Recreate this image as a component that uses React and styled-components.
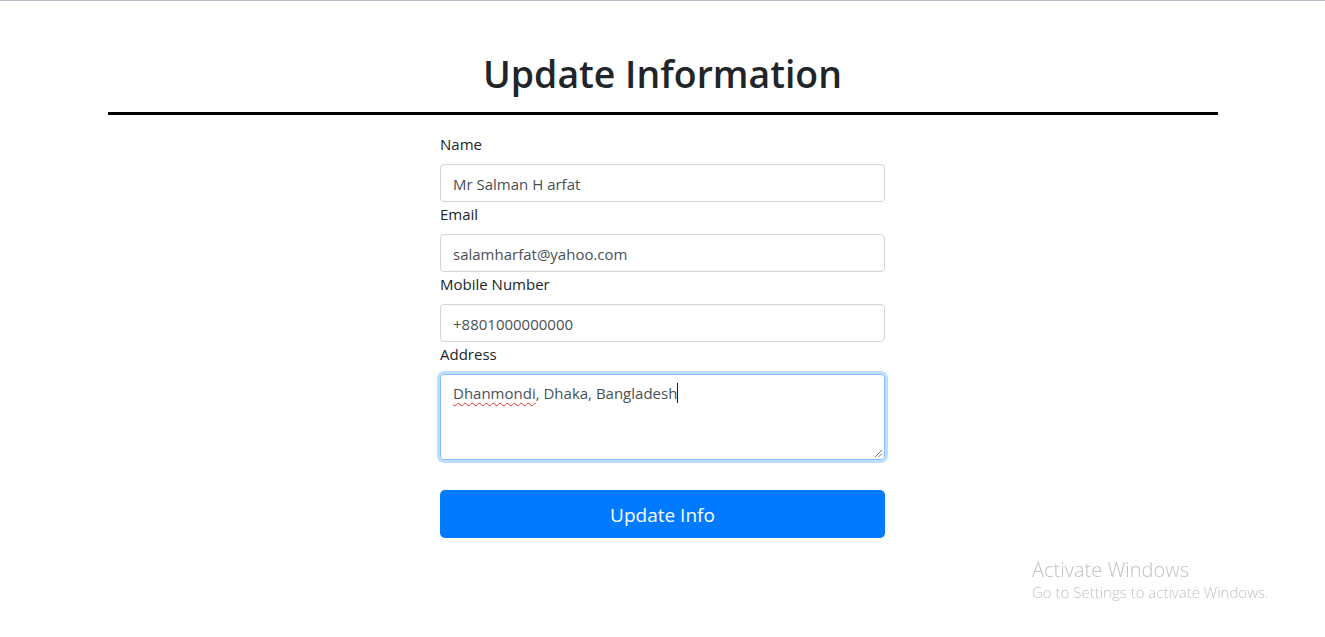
import React from "react";
import styled, { createGlobalStyle } from "styled-components";

const GlobalStyle = createGlobalStyle`
  body {
    margin: 0;
    background: #fff;
    font-family: "Open Sans", "Noto Sans", sans-serif;
    color: #212529;
  }
`;

const Page = styled.div`
  border-top: 1px solid #b8b8c8;
  min-height: 636px;
`;

const Container = styled.div`
  width: 1110px;
  margin: 0 auto;
`;

const Title = styled.h1`
  margin: 49px 0 0;
  font-size: 37.4px;
  line-height: 48px;
  font-weight: 600;
  text-align: center;
  color: #212529;
`;

const Rule = styled.hr`
  margin: 14px 0 0;
  border: 0;
  border-top: 3px solid #000;
`;

const Form = styled.form`
  width: 445px;
  margin: 0 auto;
  padding-top: 17px;
  display: flex;
  flex-direction: column;
`;

const Label = styled.label`
  font-size: 15px;
  line-height: 24px;
  margin-bottom: 8px;
`;

const Input = styled.input`
  box-sizing: border-box;
  height: 38px;
  padding: 7px 12px 5px;
  font: inherit;
  font-size: 15px;
  color: #495057;
  border: 1px solid #ced4da;
  border-radius: 4px;
  outline: none;
`;

const TextBox = styled.div`
  position: relative;
  box-sizing: border-box;
  height: 86px;
  padding: 6px 12px;
  font-size: 15px;
  line-height: 24px;
  color: #495057;
  border: 1px solid #80bdff;
  border-radius: 4px;
  box-shadow: 0 0 0 3px rgba(0, 123, 255, 0.25);
`;

const Misspelt = styled.span`
  text-decoration: underline wavy #e0302a;
  text-decoration-thickness: 1px;
  text-underline-offset: 3px;
`;

const Caret = styled.span`
  display: inline-block;
  width: 1px;
  height: 20px;
  background: #222;
  vertical-align: -4px;
`;

const Grip = styled.svg`
  position: absolute;
  right: 1px;
  bottom: 1px;
`;

const Button = styled.button`
  margin-top: 30px;
  height: 48px;
  padding-top: 2px;
  border: 0;
  border-radius: 5px;
  background: #007bff;
  color: #fff;
  font: inherit;
  font-size: 19px;
`;

const Watermark = styled.div`
  position: fixed;
  left: 1032px;
  top: 557px;
  color: #c2c2c2;
  font-family: "Open Sans", sans-serif;
  font-weight: 300;
`;

const WatermarkTitle = styled.div`
  font-size: 20px;
  line-height: 26px;
`;

const WatermarkText = styled.div`
  font-size: 15px;
  line-height: 18px;
`;

const fields = [
  { label: "Name", value: "Mr Salman H arfat" },
  { label: "Email", value: "salamharfat@yahoo.com" },
  { label: "Mobile Number", value: "+8801000000000" },
];

const App = () => {
  return (
    <Page>
      <GlobalStyle />
      <Container>
        <Title>Update Information</Title>
        <Rule />
      </Container>
      <Form onSubmit={(e) => e.preventDefault()}>
        {fields.map((field) => (
          <React.Fragment key={field.label}>
            <Label>{field.label}</Label>
            <Input type="text" defaultValue={field.value} />
          </React.Fragment>
        ))}
        <Label>Address</Label>
        <TextBox>
          <Misspelt>Dhanmondi</Misspelt>, Dhaka, Bangladesh
          <Caret />
          <Grip width="9" height="9" viewBox="0 0 9 9">
            <path d="M8 1 L1 8 M8 4.5 L4.5 8" stroke="#777" strokeWidth="1" />
          </Grip>
        </TextBox>
        <Button type="submit">Update Info</Button>
      </Form>
      <Watermark>
        <WatermarkTitle>Activate Windows</WatermarkTitle>
        <WatermarkText>Go to Settings to activate Windows.</WatermarkText>
      </Watermark>
    </Page>
  );
};

export default App;
